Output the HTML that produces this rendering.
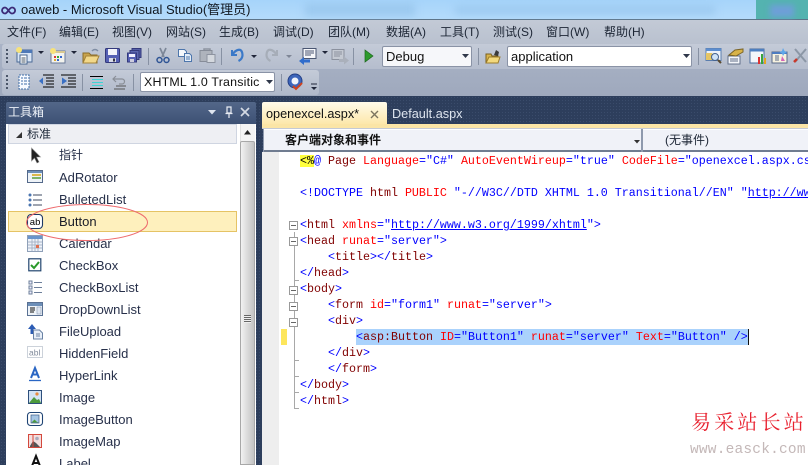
<!DOCTYPE html>
<html><head><meta charset="utf-8">
<style>
*{margin:0;padding:0;box-sizing:border-box}
html,body{width:808px;height:465px;overflow:hidden;background:#2b3c59}
body{position:relative;font-family:"Liberation Sans","Noto Sans CJK SC",sans-serif;font-size:12px;color:#15202e}
.a{position:absolute;white-space:pre}
.m{top:24px;line-height:16px;font-size:12px;color:#1c2534}
.t{left:59px;font-size:13px;line-height:16px;color:#27304a}
.c{position:absolute;white-space:pre;font-family:"Liberation Mono",monospace;font-size:11.67px;line-height:16px;height:16px;color:#00f}
.c b{font-weight:normal;color:#800000}.c i{font-style:normal;color:#f00}.c u{color:#00f}
svg{position:absolute;overflow:visible}
.box{position:absolute;left:289px;width:9px;height:9px;border:1px solid #999;background:#fff}
.box:after{content:"";position:absolute;left:1px;top:3px;width:5px;height:1px;background:#666}
.sep{position:absolute;width:1px;background:#8791a3}
.grip{position:absolute;left:6px;width:2px;height:16px;background-image:linear-gradient(#4a5568 2px,transparent 2px);background-size:2px 4px}
</style></head><body>
<!-- desktop-patterned dark background -->
<div class="a" style="left:0;top:96px;width:808px;height:369px;background-color:#2d3e5c;background-image:radial-gradient(#3a4c6b 0.6px,transparent 0.8px);background-size:3px 3px"></div>
<!-- title bar -->
<div class="a" style="left:0;top:0;width:808px;height:20px;background:linear-gradient(#a6d4fa,#b4dbfb);border-bottom:1px solid #5d7488"></div>
<div class="a" style="left:305px;top:3px;width:110px;height:13px;background:#9cc9ef;filter:blur(4px)"></div>
<div class="a" style="left:455px;top:6px;width:260px;height:8px;background:#9cc9ef;filter:blur(4px)"></div>
<div class="a" style="left:756px;top:0;width:52px;height:19px;background:#54b3b0"></div>
<div class="a" style="left:770px;top:5px;width:24px;height:12px;background:#6e9fd8;filter:blur(3px)"></div>
<svg style="left:1px;top:6px" width="16" height="9" viewBox="0 0 16 9"><path d="M4 1.5a3 3 0 1 0 0.1 6c2.5 0 4-6 7-6a3 3 0 1 1 0 6c-3 0-4.500-6-7.100-6z" fill="none" stroke="#3c2c78" stroke-width="1.800"/></svg>
<div class="a" style="left:21px;top:1px;font-size:13px;line-height:18px;color:#10171f">oaweb - Microsoft Visual Studio(管理员)</div>
<!-- menu -->
<div class="a" style="left:0;top:20px;width:808px;height:24px;background:linear-gradient(#c3cad6,#b9c1cf)"></div>
<div class="a m" style="left:7px">文件(F)</div>
<div class="a m" style="left:59px">编辑(E)</div>
<div class="a m" style="left:112px">视图(V)</div>
<div class="a m" style="left:166px">网站(S)</div>
<div class="a m" style="left:219px">生成(B)</div>
<div class="a m" style="left:273px">调试(D)</div>
<div class="a m" style="left:328px">团队(M)</div>
<div class="a m" style="left:386px">数据(A)</div>
<div class="a m" style="left:440px">工具(T)</div>
<div class="a m" style="left:493px">测试(S)</div>
<div class="a m" style="left:546px">窗口(W)</div>
<div class="a m" style="left:604px">帮助(H)</div>
<!-- toolbars background -->
<div class="a" style="left:0;top:44px;width:808px;height:52px;background:linear-gradient(#a9b3c6,#9fa9bd)"></div>
<div class="a" style="left:2px;top:44px;width:806px;height:25px;background:linear-gradient(#c4cbd8,#b5bdcd);border-radius:3px 0 0 3px"></div>
<div class="a" style="left:2px;top:70px;width:317px;height:25px;background:linear-gradient(#c4cbd8,#b0b9ca);border-radius:3px"></div>
<div class="grip" style="top:49px"></div><div class="grip" style="top:75px"></div>
<!-- toolbar 1 icons -->
<svg style="left:15px;top:47px" width="18" height="18"><rect x="2" y="3" width="15" height="12" fill="#d9e6f6" stroke="#4b6a96"/><rect x="2" y="3" width="15" height="3" fill="#4e79b8"/><rect x="5" y="8" width="7" height="9" fill="#fff" stroke="#46648e"/><path d="M6.500 11h4M6.500 13h4M6.500 15h4" stroke="#456" /><circle cx="4" cy="3" r="3" fill="#f7e27a"/></svg>
<svg style="left:37px;top:50px" width="10" height="6"><path d="M1 1h6L4 4z" fill="#20263a"/></svg>
<svg style="left:49px;top:47px" width="18" height="18"><rect x="2" y="4" width="14" height="12" fill="#f3f3ee" stroke="#6b7b99"/><rect x="2" y="4" width="14" height="2" fill="#d8c890"/><rect x="5" y="9" width="2" height="2" fill="#d33"/><rect x="8" y="9" width="2" height="2" fill="#3a3"/><rect x="11" y="9" width="2" height="2" fill="#36c"/><rect x="5" y="12" width="2" height="2" fill="#da3"/><rect x="8" y="12" width="2" height="2" fill="#36c"/><circle cx="4" cy="4" r="3" fill="#f7e27a"/></svg>
<svg style="left:70px;top:50px" width="10" height="6"><path d="M1 1h6L4 4z" fill="#20263a"/></svg>
<svg style="left:82px;top:47px" width="18" height="18"><path d="M1 6h6l2 2h6v8H1z" fill="#c9a44e" stroke="#8a6c28"/><path d="M1 16l3-7h13l-3 7z" fill="#f2d88a" stroke="#a5843a"/><path d="M10 4c2-2 4-2 6 0" fill="none" stroke="#7f8da3" stroke-width="1.500"/></svg>
<svg style="left:105px;top:48px" width="15" height="15"><rect x="0.500" y="0.500" width="14" height="14" rx="1" fill="#5560b4" stroke="#33397c"/><rect x="3" y="1" width="9" height="6" fill="#f3f4fa"/><rect x="4" y="10" width="7" height="4" fill="#d8dbe8"/><rect x="8" y="10.500" width="2" height="3" fill="#334"/></svg>
<svg style="left:127px;top:48px" width="15" height="15"><rect x="5" y="0.500" width="9" height="9" fill="#5560a8" stroke="#33397c"/><rect x="3" y="2.500" width="9" height="9" fill="#5b66b0" stroke="#33397c"/><rect x="0.500" y="5" width="9" height="9" fill="#5560b4" stroke="#33397c"/><rect x="2" y="6" width="6" height="3" fill="#eef"/><rect x="3" y="11" width="4" height="3" fill="#ccd"/></svg>
<div class="sep" style="left:148px;top:48px;height:17px"></div>
<svg style="left:155px;top:47px" width="16" height="17"><path d="M5 1l4 9M11 1L7 10" stroke="#7c8798" stroke-width="1.700"/><circle cx="4.500" cy="13" r="2.500" fill="none" stroke="#2f5595" stroke-width="1.500"/><circle cx="11.500" cy="13" r="2.500" fill="none" stroke="#2f5595" stroke-width="1.500"/></svg>
<svg style="left:177px;top:48px" width="16" height="15"><path d="M1.500 1.500h6l2 2v5h-8z" fill="#f4f7fb" stroke="#4d76ac"/><path d="M7.500 5.500h5l2 2v6h-7z" fill="#e4edf8" stroke="#4d76ac"/><path d="M9 9h4M9 11h4" stroke="#4d76ac"/></svg>
<svg style="left:199px;top:48px" width="17" height="15"><path d="M5 2.500V1h6v1.500" fill="none" stroke="#8d94a0" stroke-width="1.500"/><rect x="1" y="2.500" width="12" height="11" fill="#aeb3bc" stroke="#868c98"/><rect x="8" y="6.500" width="8" height="8" fill="#d4d8de" stroke="#8d93a0"/></svg>
<div class="sep" style="left:221px;top:48px;height:17px"></div>
<svg style="left:229px;top:47px" width="16" height="16"><path d="M3 3v5h5" fill="none" stroke="#3b79c8" stroke-width="2"/><path d="M3.500 7.500C6 3.500 13-1 13.500 8c0 3-2 5-4 6" fill="none" stroke="#3b79c8" stroke-width="2.200"/></svg>
<svg style="left:250px;top:54px" width="10" height="6"><path d="M1 1h6L4 4z" fill="#20263a"/></svg>
<svg style="left:264px;top:47px" width="16" height="16"><path d="M13 3v5H8" fill="none" stroke="#a6adb8" stroke-width="2"/><path d="M12.500 7.500C10 3.500 3-1 2.500 8c0 3 2 5 4 6" fill="none" stroke="#a6adb8" stroke-width="2.200"/></svg>
<svg style="left:285px;top:54px" width="10" height="6"><path d="M1 1h6L4 4z" fill="#7e8696"/></svg>
<svg style="left:298px;top:47px" width="19" height="18"><rect x="5" y="1.500" width="13" height="10" fill="#f6f7fa" stroke="#4a5672"/><path d="M7 4h9M7 6h9M7 8h6" stroke="#4a5672"/><path d="M1 14l5-4v2.500h6v3H6V18z" fill="#2f6ccc"/></svg>
<svg style="left:321px;top:50px" width="10" height="6"><path d="M1 1h6L4 4z" fill="#20263a"/></svg>
<svg style="left:331px;top:48px" width="19" height="17"><rect x="1" y="1.500" width="12" height="10" fill="#c4c9d2" stroke="#8b919e"/><path d="M3 4h8M3 6h8M3 8h6" stroke="#8b919e"/><path d="M8 11h5V8.500l5 4-5 4V14H8z" fill="#aab0bb"/></svg>
<div class="sep" style="left:353px;top:48px;height:17px"></div>
<svg style="left:364px;top:49px" width="10" height="14"><path d="M1 1l8 6-8 6z" fill="#2d9a2d" stroke="#1c661c" stroke-width="0.700"/></svg>
<!-- debug combo -->
<div class="a" style="left:382px;top:46px;width:90px;height:21px;background:#f6f7fa;border:1px solid #8a93a6;border-radius:2px;font-size:13px;line-height:19px;padding-left:3px;color:#111">Debug</div>
<svg style="left:461px;top:54px" width="9" height="5"><path d="M1 0h7L4.500 4z" fill="#30384a"/></svg>
<div class="sep" style="left:478px;top:48px;height:17px"></div>
<svg style="left:485px;top:49px" width="16" height="15"><path d="M1 5h5l1 2h6v7H1z" fill="#d9b54d" stroke="#7b601d"/><path d="M1 14l3-6h11l-2 6z" fill="#f3d97d" stroke="#9d7d2c"/><path d="M9 6l2-5 3 2-1 4z" fill="#3b3b3b"/></svg>
<div class="a" style="left:507px;top:46px;width:185px;height:21px;background:#fff;border:1px solid #8a93a6;border-radius:2px;font-size:13px;line-height:19px;padding-left:3px;color:#111">application</div>
<svg style="left:682px;top:54px" width="9" height="5"><path d="M1 0h7L4.500 4z" fill="#30384a"/></svg>
<div class="sep" style="left:698px;top:48px;height:17px"></div>
<svg style="left:705px;top:47px" width="18" height="18"><rect x="1" y="1.500" width="15" height="12" fill="#eef2f8" stroke="#5b7eae"/><rect x="1" y="1.500" width="15" height="2.500" fill="#5c8ed0"/><path d="M1 6h6l1 2h-1v5H1z" fill="#e5c565"/><circle cx="10" cy="10" r="3.500" fill="#cfe3f7" stroke="#44618c"/><path d="M13 13l3 3" stroke="#5a4a30" stroke-width="2"/></svg>
<svg style="left:727px;top:47px" width="18" height="18"><rect x="1" y="9" width="12" height="8" fill="#f4f6fa" stroke="#62708a"/><path d="M3 12h8M3 14h8" stroke="#62708a"/><path d="M2 8l6-5 8-1 0 3-7 4z" fill="#d8b348" stroke="#7b6426"/></svg>
<svg style="left:749px;top:47px" width="18" height="18"><rect x="1" y="2" width="14" height="14" fill="#f3f6fa" stroke="#4d6e9e"/><rect x="1" y="2" width="14" height="2.500" fill="#4d7fc0"/><rect x="9" y="10" width="2" height="7" fill="#d33"/><rect x="12" y="7" width="2" height="10" fill="#39a53c"/><rect x="15" y="11" width="2" height="6" fill="#e6a422"/></svg>
<svg style="left:771px;top:47px" width="18" height="18"><rect x="1" y="5" width="15" height="11" fill="#f7f2df" stroke="#5a6a88"/><rect x="1" y="5" width="15" height="2" fill="#4e7cc0"/><path d="M4 9h4M4 11h4M4 13h4" stroke="#5a6a88"/><path d="M12 1l1.500 3L16 5l-2.500 1.500L12 9l-1-2.500L8.500 5 11 4z" fill="#5fa6e8"/><path d="M11 9l3 5-4 0z" fill="#d664b8"/></svg>
<svg style="left:793px;top:47px" width="15" height="18"><path d="M2 2l11 13M13 2L2 15" stroke="#8c97a6" stroke-width="2"/><path d="M1 15l3-3" stroke="#c8382a" stroke-width="2.500"/></svg>
<!-- toolbar 2 icons -->
<svg style="left:18px;top:74px" width="12" height="16"><path d="M1 1h10v14H1z" fill="#f7faff" stroke="#3f6ea8" stroke-dasharray="2 1"/><path d="M3 4h2M6 4h3M3 7h2M6 7h3M3 10h2M6 10h3" stroke="#3f6ea8"/></svg>
<svg style="left:38px;top:74px" width="17" height="16"><path d="M5 1h11M8 4h8M8 7h8M8 10h8M5 13h11" stroke="#000" stroke-width="1.100"/><path d="M1 7l4-3.500v7z" fill="#3a70c4"/></svg>
<svg style="left:60px;top:74px" width="17" height="16"><path d="M1 1h15M8 4h8M8 7h8M8 10h8M1 13h15" stroke="#000" stroke-width="1.100"/><path d="M7 7L2 3.500v7z" fill="#3a70c4"/></svg>
<div class="sep" style="left:82px;top:74px;height:17px"></div>
<svg style="left:89px;top:75px" width="15" height="15"><path d="M1 1.500h13" stroke="#000"/><path d="M3 4.500h11M3 7.500h11" stroke="#3ed4d4"/><path d="M3 10.500h11" stroke="#3ed4d4"/><path d="M1 13.500h13" stroke="#000"/></svg>
<svg style="left:111px;top:74px" width="16" height="16"><path d="M5 2L2 5l3 3M2 5h9a2.500 2.500 0 0 1 0 5H8" fill="none" stroke="#8a8f98" stroke-width="1.200"/><path d="M5 12h10M3 15h11" stroke="#555"/></svg>
<div class="sep" style="left:133px;top:74px;height:17px"></div>
<div class="a" style="left:140px;top:72px;width:135px;height:20px;background:#fff;border:1px solid #8a93a6;border-radius:2px;font-size:12.400px;line-height:18px;padding-left:3px;color:#111;overflow:hidden"><span style="letter-spacing:.2px">XHTML 1.0 Transitic</span></div>
<svg style="left:265px;top:80px" width="9" height="5"><path d="M1 0h7L4.500 4z" fill="#30384a"/></svg>
<div class="sep" style="left:281px;top:74px;height:17px"></div>
<svg style="left:287px;top:73px" width="18" height="18"><circle cx="8" cy="8" r="7" fill="#3e66ba" stroke="#233f85"/><circle cx="8" cy="8" r="3.500" fill="#f0f4fb"/><path d="M6 13l3 3 6-6" fill="none" stroke="#d0431e" stroke-width="2"/></svg>
<svg style="left:309px;top:83px" width="9" height="9"><path d="M2 1h6" stroke="#20263a"/><path d="M2 4h6l-3 3z" fill="#20263a"/></svg>
<!-- toolbox -->
<div class="a" style="left:6px;top:102px;width:250px;height:22px;background:linear-gradient(#536789,#3d5174);border-radius:2px 2px 0 0"></div>
<div class="a" style="left:8px;top:104px;color:#eef2f8;font-size:12px;line-height:16px">工具箱</div>
<svg style="left:208px;top:110px" width="9" height="5"><path d="M0 0h8L4 4.500z" fill="#dfe5ef"/></svg>
<svg style="left:224px;top:106px" width="10" height="13"><path d="M3 1h4v6H3zM1.500 7.500h7M5 8v4" fill="none" stroke="#e8ecf3" stroke-width="1.200"/></svg>
<svg style="left:240px;top:107px" width="11" height="11"><path d="M1 1l8 8M9 1l-8 8" stroke="#d4dae4" stroke-width="1.700"/></svg>
<div class="a" style="left:6px;top:124px;width:250px;height:341px;background:#fff"></div>
<div class="a" style="left:8px;top:124px;width:229px;height:20px;background:#eeeff3;border:1px solid #cfd5e1"></div>
<svg style="left:16px;top:131px" width="8" height="8"><path d="M6 1v6H0z" fill="#333"/></svg>
<div class="a" style="left:27px;top:126px;font-size:12px;line-height:16px;color:#1f2a3a">标准</div>
<!-- scrollbar -->
<div class="a" style="left:240px;top:124px;width:15px;height:341px;background:#f4f4f4;border-left:1px solid #e2e2e2"></div>
<svg style="left:244px;top:130px" width="9" height="5"><path d="M0 4.500h7L3.500 0z" fill="#222"/></svg>
<div class="a" style="left:240px;top:141px;width:15px;height:324px;background:linear-gradient(90deg,#f2f2f2,#dcdcdc 45%,#c3c3c3);border:1px solid #a8a8a8;border-radius:2px 2px 0 0"></div>
<div class="a" style="left:244px;top:315px;width:7px;height:8px;background:repeating-linear-gradient(#666 0 1px,#eee 1px 2px)"></div>
<div class="a" style="left:8px;top:211px;width:229px;height:21px;background:#fef0bd;border:1px solid #e5c365"></div>
<div class="a t" style="top:147px;font-size:12px">指针</div>
<div class="a t" style="top:170px">AdRotator</div>
<div class="a t" style="top:192px">BulletedList</div>
<div class="a t" style="top:214px;color:#1a1c28">Button</div>
<div class="a t" style="top:236px">Calendar</div>
<div class="a t" style="top:258px">CheckBox</div>
<div class="a t" style="top:280px">CheckBoxList</div>
<div class="a t" style="top:302px">DropDownList</div>
<div class="a t" style="top:324px">FileUpload</div>
<div class="a t" style="top:346px">HiddenField</div>
<div class="a t" style="top:368px">HyperLink</div>
<div class="a t" style="top:390px">Image</div>
<div class="a t" style="top:412px">ImageButton</div>
<div class="a t" style="top:434px">ImageMap</div>
<div class="a t" style="top:456px">Label</div>
<!-- toolbox icons -->
<svg style="left:30px;top:147px" width="12" height="17"><path d="M1.500 1v13l3-3 2.500 5 2-1-2.500-5h4z" fill="#222" stroke="#888" stroke-width=".6"/></svg>
<svg style="left:27px;top:170px" width="17" height="14"><rect x=".5" y=".5" width="15" height="12" fill="#eef3f8" stroke="#54698a"/><rect x="1" y="1" width="14" height="2" fill="#6d8fb8"/><rect x="5" y="4" width="9" height="2" fill="#dcb84c"/><rect x="5" y="7" width="9" height="2" fill="#7db46a"/></svg>
<svg style="left:28px;top:193px" width="14" height="14"><path d="M5 2h9M5 7h9M5 12h9" stroke="#3c4a60"/><circle cx="2" cy="2" r="1.500" fill="#4a74b0"/><circle cx="2" cy="7" r="1.500" fill="#4a74b0"/><circle cx="2" cy="12" r="1.500" fill="#4a74b0"/></svg>
<svg style="left:27px;top:214px" width="17" height="16"><rect x=".5" y=".5" width="15" height="14" rx="3.500" fill="#fff" stroke="#1f3a66" stroke-width="1.100"/><text x="2.800" y="11" font-family="Liberation Sans" font-size="9.500" fill="#000">ab</text></svg>
<svg style="left:27px;top:235px" width="16" height="17"><rect x=".5" y=".5" width="15" height="16" fill="#eef3fa" stroke="#8fa0b8"/><rect x="1" y="1" width="14" height="3" fill="#6a94cc"/><path d="M1 7h14M1 10h14M1 13h14M5 4v12M8 4v12M11 4v12" stroke="#a9b6c8"/><rect x="9" y="10" width="3" height="3" fill="#e07050"/></svg>
<svg style="left:28px;top:258px" width="14" height="14"><rect x=".8" y=".8" width="12" height="12" fill="#fff" stroke="#23466f" stroke-width="1.200"/><path d="M3 7l3 3 5-6" fill="none" stroke="#2a9a2a" stroke-width="2"/></svg>
<svg style="left:28px;top:280px" width="15" height="15"><path d="M1 1h3v3H1zM1 6h3v3H1zM1 11h3v3H1z" fill="#eef" stroke="#6d7f9a"/><path d="M6 2.500h8M6 7.500h8M6 12.500h8" stroke="#6d7f9a"/></svg>
<svg style="left:27px;top:302px" width="16" height="14"><rect x=".5" y=".5" width="15" height="13" fill="#eef3f8" stroke="#5a7193"/><rect x="1" y="1" width="14" height="3" fill="#6d8fb8"/><path d="M3 6h5M3 8h5M3 10h4" stroke="#111"/><rect x="10" y="5" width="4" height="7" fill="#dfe6f0" stroke="#7b8ca6" stroke-width=".5"/></svg>
<svg style="left:27px;top:323px" width="16" height="17"><path d="M5 1L1 6h2.500v5h3V6H9z" fill="#2c5cb4"/><path d="M6.500 7h6l3 3v6h-9z" fill="#e8eff8" stroke="#6a82a4"/><path d="M9 11h4M9 13h4" stroke="#6a82a4"/></svg>
<svg style="left:27px;top:346px" width="16" height="13"><rect x=".5" y=".5" width="15" height="11" fill="none" stroke="#9aa5b6" stroke-dasharray="1 1"/><text x="2" y="9.500" font-family="Liberation Sans" font-size="8.500" fill="#808a9a">abl</text></svg>
<svg style="left:28px;top:367px" width="14" height="15"><path d="M3 11L7 1l4 10M4.500 7.500h5" fill="none" stroke="#2a66c4" stroke-width="2"/><path d="M1 13.500h12" stroke="#2a66c4" stroke-width="1.300"/></svg>
<svg style="left:28px;top:390px" width="14" height="14"><rect x=".5" y=".5" width="13" height="13" fill="#d4e3f4" stroke="#2e4f7c"/><path d="M1 13l5-6 3 3 2-1 2 4z" fill="#4c9a3c"/><circle cx="9" cy="4" r="1.600" fill="#e88a3c"/></svg>
<svg style="left:27px;top:412px" width="16" height="14"><rect x=".5" y=".5" width="15" height="13" rx="3" fill="#fff" stroke="#1f4474" stroke-width="1.100"/><rect x="4" y="3" width="8" height="8" fill="#a7c6e4" stroke="#3b5c88" stroke-width=".7"/><path d="M4.500 10.500l3-3 2 2 2 1z" fill="#4c9a3c"/></svg>
<svg style="left:28px;top:434px" width="14" height="14"><rect x=".5" y=".5" width="13" height="13" fill="#f4dede" stroke="#d4483c"/><path d="M2 12l3-5 3 2 4 4H2z" fill="#555"/><path d="M5 1v12" stroke="#d4483c"/><circle cx="9" cy="4.500" r="1.800" fill="#aab"/></svg>
<svg style="left:30px;top:456px" width="12" height="10"><path d="M2 10L6 0l4 10M3.500 7h5" fill="none" stroke="#111" stroke-width="2"/></svg>
<!-- ellipse -->
<svg style="left:0;top:0" width="808" height="465"><ellipse cx="87" cy="222.500" rx="60.500" ry="18" fill="none" stroke="#ee6b6e" stroke-width="1"/></svg>
<!-- tabs -->
<div class="a" style="left:262px;top:102px;width:125px;height:23px;background:linear-gradient(#fffbea,#fde7a8);border-radius:2px 2px 0 0"></div>
<div class="a" style="left:266px;top:106px;font-size:12.700px;line-height:16px;color:#111">openexcel.aspx*</div>
<svg style="left:370px;top:110px" width="10" height="10"><path d="M1 1l7 7M8 1L1 8" stroke="#7c7460" stroke-width="1.400"/></svg>
<div class="a" style="left:392px;top:106px;font-size:12.700px;line-height:16px;color:#dde4ee">Default.aspx</div>
<div class="a" style="left:262px;top:124px;width:546px;height:4px;background:#fbe5a6"></div>
<div class="a" style="left:262px;top:128px;width:546px;height:1px;background:#c4cad6"></div>
<!-- nav bar -->
<div class="a" style="left:263px;top:129px;width:545px;height:23px;background:#f0f2f8;border-top:1px solid #fff;border-bottom:2px solid #707c90"></div>
<div class="a" style="left:263px;top:129px;width:1px;height:23px;background:#8e99ad"></div>
<div class="a" style="left:641px;top:129px;width:2px;height:23px;background:#8e99ad"></div>
<div class="a" style="left:285px;top:132px;font-size:12px;font-weight:bold;line-height:16px;color:#111">客户端对象和事件</div>
<svg style="left:634px;top:140px" width="8" height="5"><path d="M0 0h6L3 3.500z" fill="#333"/></svg>
<div class="a" style="left:665px;top:132px;font-size:12px;line-height:16px;color:#1c2534">(无事件)</div>
<!-- editor -->
<div class="a" style="left:262px;top:152px;width:546px;height:313px;background:#fff"></div>
<div class="a" style="left:262px;top:152px;width:17px;height:313px;background:#eeeeee"></div>
<div class="a" style="left:281px;top:329px;width:6px;height:16px;background:#fde65c"></div>
<div class="a" style="left:300px;top:155px;width:14px;height:12px;background:#ffff3c"></div>
<div class="a" style="left:356px;top:329px;width:393px;height:16px;background:#aad2fc"></div>
<div class="a" style="left:748px;top:329px;width:1px;height:16px;background:#111"></div>
<!-- outlining -->
<div class="a" style="left:294px;top:232px;width:1px;height:176px;background:#a8a8a8"></div>
<div class="a" style="left:294px;top:280px;width:5px;height:1px;background:#a8a8a8"></div>
<div class="a" style="left:294px;top:360px;width:5px;height:1px;background:#a8a8a8"></div>
<div class="a" style="left:294px;top:376px;width:5px;height:1px;background:#a8a8a8"></div>
<div class="a" style="left:294px;top:392px;width:5px;height:1px;background:#a8a8a8"></div>
<div class="a" style="left:294px;top:408px;width:5px;height:1px;background:#a8a8a8"></div>
<div class="box" style="top:221px"></div>
<div class="box" style="top:237px"></div>
<div class="box" style="top:286px"></div>
<div class="box" style="top:302px"></div>
<div class="box" style="top:318px"></div>
<!-- code -->
<div class="c" style="left:300px;top:153px"><span style="color:#000">&lt;%</span>@ <b>Page</b> <i>Language</i>="C#" <i>AutoEventWireup</i>="true" <i>CodeFile</i>="openexcel.aspx.cs</div>
<div class="c" style="left:300px;top:185px">&lt;!DOCTYPE <b>html</b> <i>PUBLIC</i> "-//W3C//DTD XHTML 1.0 Transitional//EN" "<u>http://ww</u></div>
<div class="c" style="left:300px;top:217px">&lt;<b>html</b> <i>xmlns</i>="<u>http://www.w3.org/1999/xhtml</u>"&gt;</div>
<div class="c" style="left:300px;top:233px">&lt;<b>head</b> <i>runat</i>="server"&gt;</div>
<div class="c" style="left:328px;top:249px">&lt;<b>title</b>&gt;&lt;/<b>title</b>&gt;</div>
<div class="c" style="left:300px;top:265px">&lt;/<b>head</b>&gt;</div>
<div class="c" style="left:300px;top:281px">&lt;<b>body</b>&gt;</div>
<div class="c" style="left:328px;top:297px">&lt;<b>form</b> <i>id</i>="form1" <i>runat</i>="server"&gt;</div>
<div class="c" style="left:328px;top:313px">&lt;<b>div</b>&gt;</div>
<div class="c" style="left:356px;top:329px">&lt;<b>asp:Button</b> <i>ID</i>="Button1" <i>runat</i>="server" <i>Text</i>="Button" /&gt;</div>
<div class="c" style="left:328px;top:345px">&lt;/<b>div</b>&gt;</div>
<div class="c" style="left:328px;top:361px">&lt;/<b>form</b>&gt;</div>
<div class="c" style="left:300px;top:377px">&lt;/<b>body</b>&gt;</div>
<div class="c" style="left:300px;top:393px">&lt;/<b>html</b>&gt;</div>
<!-- watermark -->
<div class="a" style="left:691px;top:409px;font-family:'Liberation Serif','Noto Serif CJK SC',serif;font-size:20px;letter-spacing:3.200px;line-height:28px;color:#e8202e">易采站长站</div>
<div class="a" style="left:690px;top:441px;font-family:'Liberation Mono',monospace;font-size:14.500px;letter-spacing:.2px;line-height:18px;color:#c4b8b8">www.easck.com</div>
</body></html>
